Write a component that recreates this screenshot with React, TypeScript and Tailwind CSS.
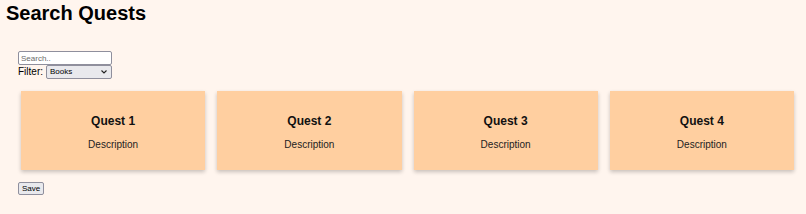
import React from "react";

export default function App() {
  const quests = ["Quest 1", "Quest 2", "Quest 3", "Quest 4"];
  return (
    <div
      className="min-h-[214px] w-full bg-[#fff5ee] text-black"
      style={{ fontFamily: '"Liberation Sans", Arial, sans-serif' }}
    >
      <h1 className="m-0 pl-[6px] pt-[2px] text-[20px] font-bold leading-[23px]">Search Quests</h1>
      <div className="pl-[18px] pr-[12px] pt-[26px]">
        <div className="flex flex-col items-start">
          <input
            type="text"
            placeholder="Search.."
            className="h-[14px] w-[94px] rounded-[2px] border border-[#8f8f9d] bg-white px-[2px] text-[8px] leading-[12px] text-black placeholder:text-[#6b6b6b] outline-none"
          />
          <div className="flex items-center text-[10px] leading-[14px]">
            <span className="mr-[3px]">Filter:</span>
            <div className="relative flex h-[14px] w-[66px] items-center rounded-[2px] border border-[#8f8f9d] bg-[#e9e9ed] pl-[3px] text-[8px]">
              <span>Books</span>
              <svg
                className="absolute right-[4px] top-[4px]"
                width="6"
                height="4"
                viewBox="0 0 6 4"
                fill="none"
                stroke="#222"
                strokeWidth="1.1"
              >
                <path d="M0.5 0.5 L3 3 L5.5 0.5" />
              </svg>
            </div>
          </div>
        </div>
        <div className="mt-[12px] grid grid-cols-4 gap-x-[12px] pl-[3px]">
          {quests.map((q) => (
            <div
              key={q}
              className="flex h-[79px] flex-col items-center justify-center bg-[#ffcfa0] pt-[4px] shadow-[0_2px_4px_rgba(0,0,0,0.22)]"
            >
              <div className="text-[12px] font-bold leading-[14px] text-[#111]">{q}</div>
              <div className="mt-[11px] text-[10px] leading-[12px] text-[#222]">Description</div>
            </div>
          ))}
        </div>
        <button className="mt-[12px] h-[13px] rounded-[2px] border border-[#8f8f9d] bg-[#e9e9ed] px-[3px] text-[8px] leading-[11px]">
          Save
        </button>
      </div>
    </div>
  );
}
